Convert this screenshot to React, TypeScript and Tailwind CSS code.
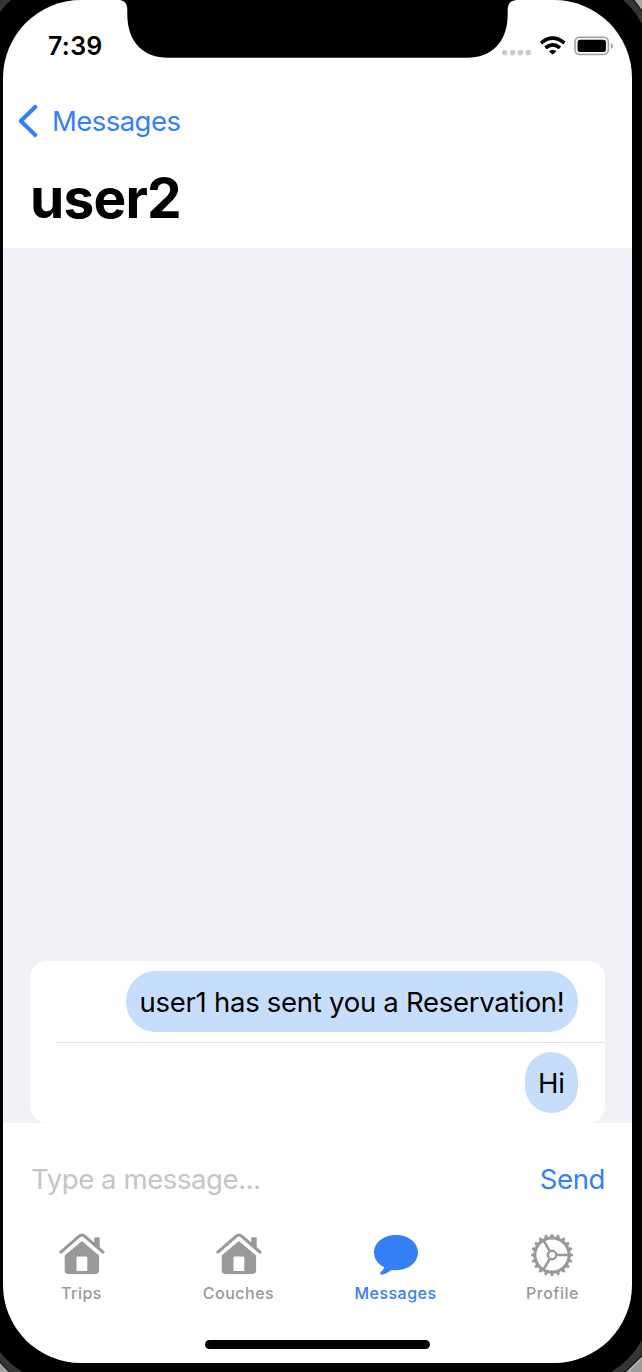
import React from "react";

function Notch() {
  return (
    <svg className="absolute left-[113px] top-0 h-[59px] w-[404px]" viewBox="116 0 404 59" fill="#000">
      <path d="M119 0C125 0.5 127.3 4 127.3 10V14C127.3 43 144 57.7 168 57.7H467C491 57.7 507.7 43 507.7 14V10C507.7 4 510 0.5 517 0Z" />
    </svg>
  );
}

function StatusIcons() {
  return (
    <svg className="absolute left-[497px] top-[34px] h-[24px] w-[116px]" viewBox="500 34 116 24">
      <g fill="#cbcbcb">
        <rect x="502" y="50" width="5.2" height="5.2" rx="1.8" />
        <rect x="510" y="50" width="5.2" height="5.2" rx="1.8" />
        <rect x="517.8" y="50" width="5.2" height="5.2" rx="1.8" />
        <rect x="525.7" y="50" width="5.2" height="5.2" rx="1.8" />
      </g>
      <g fill="none" stroke="#000" strokeWidth="3.6">
        <path d="M541 43.1Q552.7 33.3 564.4 43.1" />
        <path d="M545.4 47.9Q552.7 41.9 560 47.9" />
      </g>
      <path d="M549 51.2Q552.7 48.2 556.4 51.2L552.7 54.8Z" fill="#000" />
      <rect x="575" y="37.3" width="33.4" height="17.2" rx="4.6" fill="#f4f4f4" stroke="#a2a2a2" strokeWidth="1.6" />
      <rect x="577.6" y="39.8" width="28.3" height="12.3" rx="2.4" fill="#000" />
      <path d="M610.8 43Q613 44 613 46T610.8 49Z" fill="#a2a2a2" />
    </svg>
  );
}

function HouseIcon() {
  return (
    <svg className="h-[42px] w-[46px]" viewBox="0 0 46 42" fill="#999">
      <path d="M1.9 19.1L20.2 3.2Q22.9 .8 25.6 3.2L44 19.1" fill="none" stroke="#999" strokeWidth="3.1" strokeLinecap="round" />
      <path d="M35.2 10V5.6Q35.2 4.3 36.5 4.3H39.4Q40.7 4.3 40.7 5.6V15.2Z" />
      <path fillRule="evenodd" d="M22.9 8L40.1 22.5V37.2Q40.1 41 36.3 41H9.5Q5.7 41 5.7 37.2V22.5ZM18.7 23.6Q17.5 23.6 17.5 24.8V38H28.3V24.8Q28.3 23.6 27.1 23.6Z" />
    </svg>
  );
}

function BubbleIcon() {
  return (
    <svg className="h-[42px] w-[46px]" viewBox="0 0 46 42" fill="#3480f7">
      <path d="M23 2C35.3 2 45 9.5 45 19.5S35.3 37.2 23 37.2C21.5 37.2 20 37.1 18.6 36.9C15.2 39.5 11.3 41.5 8.5 41.5C6.8 41.5 6.7 40.2 7.8 39.1C9.4 37.5 11 36 11.2 34.2C5 31.2 1 25.8 1 19.5C1 9.5 10.7 2 23 2Z" />
    </svg>
  );
}

const teeth = Array.from({ length: 20 }, (_, i) => i * 18);

function GearIcon() {
  return (
    <svg className="relative -left-px top-px h-[44px] w-[46px]" viewBox="-23 -22 46 44" fill="none" stroke="#999">
      <circle r="17.1" strokeWidth="3" />
      <circle r="4.2" strokeWidth="2.4" />
      <path d="M4.8 0H17M-2.4 -4.1L-8.5 -14.7M-2.4 4.1L-8.5 14.7" strokeWidth="2.6" />
      {teeth.map((angle) => (
        <path key={angle} d="M17.5 -2.2L20.8 -1.1Q21.8 0 20.8 1.1L17.5 2.2Z" fill="#999" stroke="none" transform={`rotate(${angle})`} />
      ))}
    </svg>
  );
}

function BezelCorners() {
  return (
    <>
      <svg className="absolute left-0 top-0 h-3 w-3" viewBox="0 0 12 12">
        <path d="M0 0H11Q5 5 0 12Z" fill="#353535" />
      </svg>
      <svg className="absolute right-0 top-0 h-6 w-5" viewBox="0 0 20 24">
        <path d="M1 0Q12 9 20 24V0Z" fill="#343434" />
        <path d="M11 0L20 12V0Z" fill="#161616" />
        <path d="M12.5 0L20 10V0Z" fill="#a8a8a8" />
      </svg>
      <svg className="absolute bottom-0 left-0 h-6 w-6" viewBox="0 0 24 24">
        <path d="M0 4Q10 17 23 24H0Z" fill="#353535" />
        <path d="M0 13L10 24H0Z" fill="#171717" />
        <path d="M0 15L8.5 24H0Z" fill="#a2a2a2" />
      </svg>
      <svg className="absolute bottom-0 right-0 h-8 w-8" viewBox="0 0 32 32">
        <path d="M32 0Q20 21 1 32H32Z" fill="#353535" />
        <path d="M32 15L14 32H32Z" fill="#111" />
        <path d="M32 16.5L16 32H32Z" fill="#b3b3b3" />
        <path d="M32 18.5L19 32H32Z" fill="#999" />
      </svg>
    </>
  );
}

function Message({ children }: { children: React.ReactNode }) {
  return (
    <div className="flex h-[81px] items-center justify-end pr-[27px]">
      <div className="flex h-[61px] items-center rounded-[30px] bg-[#c6defc] px-[13.5px] pt-[2px]">{children}</div>
    </div>
  );
}

function Tab({ icon, children, active = false }: { icon: React.ReactNode; children: React.ReactNode; active?: boolean }) {
  return (
    <button className={"flex w-[157px] flex-col items-center text-[16px] font-medium leading-5 " + (active ? "text-[#3480f7]" : "text-[#999]")}>
      <span className="flex h-[44px] items-center">{icon}</span>
      <span className="mt-[7px] tracking-[0.5px]">{children}</span>
    </button>
  );
}

export default function App() {
  return (
    <div className="relative h-[1372px] w-[642px] overflow-hidden bg-black pl-[3px] font-['Inter','Liberation_Sans',sans-serif] text-black">
      <BezelCorners />
      <div className="relative flex h-[1363px] w-[629px] flex-col overflow-hidden rounded-[78px] bg-white">
        <header className="h-[248px] shrink-0">
          <div className="flex h-[92px] items-center pl-[45px]">
            <span className="text-[25px] font-semibold leading-8 tracking-[0.3px]">7:39</span>
          </div>
          <button className="flex h-[58px] items-center pl-[15px] text-[27.5px] tracking-[-0.55px] text-[#3480f7]">
            <svg className="mr-[13px] h-[34px] w-[21px]" viewBox="0 0 21 34" fill="none" stroke="#3480f7" strokeWidth="4.1" strokeLinecap="round" strokeLinejoin="round">
              <path d="M17.2 3L2.8 17L17.2 31" />
            </svg>
            <span className="pt-[2px]">Messages</span>
          </button>
          <h1 className="mt-[13px] pl-[27px] text-[55px] font-bold leading-[70px] tracking-[-0.8px]">user2</h1>
        </header>
        <main className="flex h-[875px] shrink-0 flex-col justify-end bg-[#f2f1f7] px-[27px]">
          <div className="rounded-[17px] bg-white text-[27.5px]">
            <Message><span className="whitespace-nowrap tracking-[-0.27px]">user1 has sent you a Reservation!</span></Message>
            <div className="-mb-px ml-[26px] h-px bg-[#e4e4e6]" />
            <Message><span className="tracking-[-0.3px]">Hi</span></Message>
          </div>
        </main>
        <div className="mt-[28px] flex h-[58px] shrink-0 items-center justify-between pl-[28px] pr-[27px] text-[27.5px]">
          <span className="tracking-[-0.4px] text-[#c5c5c7]">Type a message...</span>
          <button className="tracking-[-0.4px] text-[#3480f7]">Send</button>
        </div>
        <nav className="mt-[23px] flex shrink-0">
          <Tab icon={<HouseIcon />}>Trips</Tab>
          <Tab icon={<HouseIcon />}>Couches</Tab>
          <Tab icon={<BubbleIcon />} active>Messages</Tab>
          <Tab icon={<GearIcon />}>Profile</Tab>
        </nav>
        <div className="ml-[202px] mt-[37px] h-[9px] w-[225px] shrink-0 rounded-full bg-black" />
        <Notch />
        <StatusIcons />
      </div>
    </div>
  );
}
